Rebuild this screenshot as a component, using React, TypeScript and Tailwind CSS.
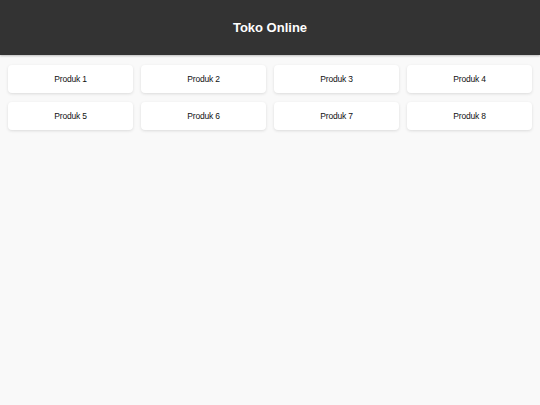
export default function App() {
  const products = ["Produk 1", "Produk 2", "Produk 3", "Produk 4", "Produk 5", "Produk 6", "Produk 7", "Produk 8"];

  return (
    <div className="min-h-[405px] bg-[#f9f9f9] font-['Liberation_Sans',Arial,sans-serif]">
      {/* Header */}
      <header className="h-[55px] bg-[#333333] flex items-center justify-center shadow-[0_1px_2px_rgba(0,0,0,0.25)]">
        <h1 className="text-white font-bold text-[13px]">Toko Online</h1>
      </header>

      {/* Product grid */}
      <main className="grid grid-cols-4 gap-x-[8px] gap-y-[9px] px-[8px] pt-[10px]">
        {products.map((p) => (
          <div
            key={p}
            className="h-[28px] bg-white rounded-[4px] flex items-center justify-center text-[8.5px] tracking-[-0.2px] text-[#111] shadow-[0_1px_3px_rgba(0,0,0,0.12)]"
          >
            {p}
          </div>
        ))}
      </main>
    </div>
  );
}
